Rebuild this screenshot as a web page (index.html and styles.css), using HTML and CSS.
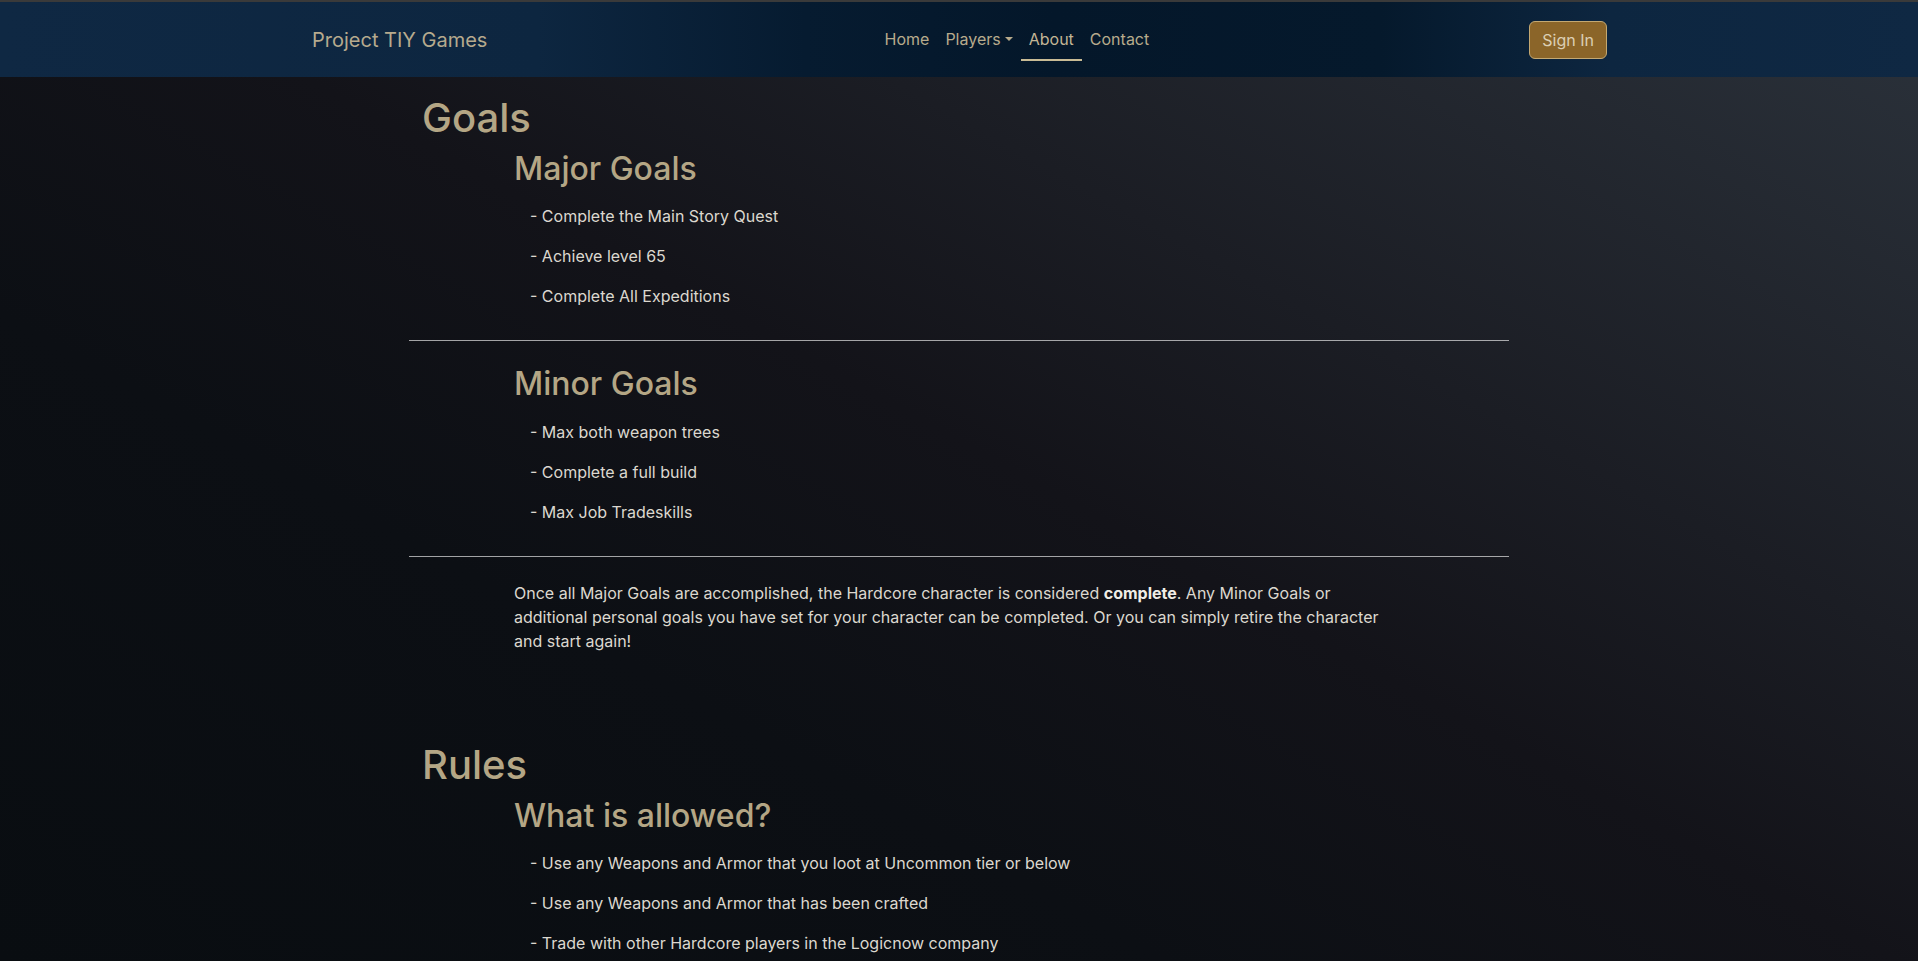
FILE: index.html
```html
<!DOCTYPE html>
<html lang="en">
<head>
<meta charset="utf-8">
<title>Project TIY Games - About</title>
<link rel="stylesheet" href="styles.css">
</head>
<body>
<header class="navbar">
  <div class="nav-inner">
    <a class="brand" href="#">Project TIY Games</a>
    <ul class="nav">
      <li><a class="nav-link" href="#">Home</a></li>
      <li><a class="nav-link dropdown-toggle" href="#">Players</a></li>
      <li><a class="nav-link active" href="#">About</a></li>
      <li><a class="nav-link" href="#">Contact</a></li>
    </ul>
    <button class="btn-signin" type="button">Sign In</button>
  </div>
</header>
<main class="main">
  <section class="block">
    <h1 class="title">Goals</h1>
    <div class="sub">
      <h2 class="subtitle">Major Goals</h2>
      <p class="item">- Complete the Main Story Quest</p>
      <p class="item">- Achieve level 65</p>
      <p class="item">- Complete All Expeditions</p>
    </div>
    <hr class="rule">
    <div class="sub">
      <h2 class="subtitle">Minor Goals</h2>
      <p class="item">- Max both weapon trees</p>
      <p class="item">- Complete a full build</p>
      <p class="item">- Max Job Tradeskills</p>
    </div>
    <hr class="rule">
    <div class="sub">
      <p class="text">Once all Major Goals are accomplished, the Hardcore character is considered <strong>complete</strong>. Any Minor Goals or additional personal goals you have set for your character can be completed. Or you can simply retire the character and start again!</p>
    </div>
  </section>
  <section class="block block-gap">
    <h1 class="title">Rules</h1>
    <div class="sub last">
      <h2 class="subtitle">What is allowed?</h2>
      <p class="item">- Use any Weapons and Armor that you loot at Uncommon tier or below</p>
      <p class="item">- Use any Weapons and Armor that has been crafted</p>
      <p class="item">- Trade with other Hardcore players in the Logicnow company</p>
    </div>
  </section>
</main>
</body>
</html>
```
FILE: styles.css
```css
html {
  min-height: 100%;
  background: linear-gradient(29deg, #090d11 0%, #0c0f14 32%, #131319 52%, #1b1d24 68%, #2b323b 100%) fixed;
}
body {
  margin: 0;
  font-family: Inter, "Noto Sans", sans-serif;
  font-size: 16px;
  line-height: 1.5;
  color: #dcd8cf;
}
a { text-decoration: none; }

.navbar {
  border-top: 2px solid #3a3a3a;
  height: 75px;
  background: linear-gradient(90deg, #0f2843 0%, #0d2640 28%, #061b30 42%, #04172a 55%, #05192c 72%, #0d2640 84%, #0f2843 100%);
}
.nav-inner {
  max-width: 1320px;
  margin: 0 auto;
  padding: 0 12px;
  height: 100%;
  display: flex;
  align-items: center;
  box-sizing: border-box;
}
.brand {
  font-size: 20px;
  line-height: 30px;
  color: #b6aa8e;
  margin-left: 1px;
  margin-right: 16px;
}
.nav {
  flex: 1;
  display: flex;
  justify-content: center;
  list-style: none;
  margin: 0;
  padding: 0 0 0 2px;
}
.nav-link {
  display: block;
  padding: 8px;
  line-height: 24px;
  color: #b8ab8c;
  border-bottom: 2px solid transparent;
}
.nav-link.active {
  border-bottom-color: #c9bb95;
  color: #c3b595;
}
.dropdown-toggle::after {
  content: "";
  display: inline-block;
  margin-left: 4px;
  vertical-align: 4px;
  border-top: 4.8px solid currentColor;
  border-left: 4.8px solid transparent;
  border-right: 4.8px solid transparent;
}
.btn-signin {
  font-family: inherit;
  font-size: 16px;
  line-height: 24px;
  padding: 6px 12px;
  color: #dccfb4;
  background: #8b6529;
  border: 1px solid #c3a872;
  border-radius: 6px;
  margin-left: 1px;
}

.main {
  width: 1100px;
  margin: 0 auto;
  padding-top: 17px;
}
.block {
  display: flow-root;
}
.title {
  font-size: 40px;
  font-weight: 500;
  line-height: 1.2;
  margin: 0;
  padding-left: 13px;
  color: #b4a685;
}
.sub {
  display: flow-root;
  padding: 8px 105px 0;
}
.subtitle {
  font-size: 32px;
  font-weight: 500;
  line-height: 1.2;
  margin: 0 0 16px;
  color: #b4a685;
}
.item {
  margin: 0 0 16px;
  padding-left: 16px;
}
.last .item:last-child {
  margin-bottom: 0;
}
.text {
  margin: 0 0 16px;
}
.text strong {
  font-weight: 700;
  color: #f0ede6;
}
.rule {
  margin: 16px 0;
  border: 0;
  border-top: 1px solid rgba(255, 255, 255, 0.62);
}
.block-gap {
  margin-top: 72px;
}
```
